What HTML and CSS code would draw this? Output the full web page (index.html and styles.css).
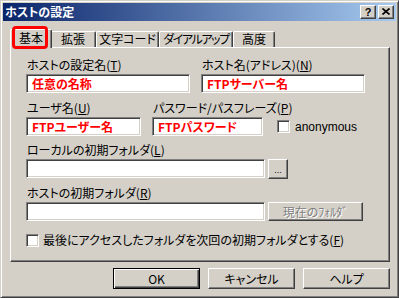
FILE: index.html
```html
<!DOCTYPE html>
<html lang="ja">
<head>
<meta charset="utf-8">
<title>ホストの設定</title>
<link rel="stylesheet" href="styles.css">
</head>
<body>
<div class="window">
  <div class="titlebar">
    <span class="title">ホストの設定</span>
    <div class="tbtns">
      <span class="tbtn help">?</span>
      <span class="tbtn close"><svg width="8" height="7" viewBox="0 0 8 7"><path d="M0.5 0.5 L7.5 6.5 M7.5 0.5 L0.5 6.5" stroke="#000" stroke-width="1.6"/></svg></span>
    </div>
  </div>
  <div class="content">
    <div class="tabs">
      <div class="tab sel">基本<span class="mark"></span></div>
      <div class="tab w46">拡張</div>
      <div class="tab w63">文字コード</div>
      <div class="tab w74">ダイアルアップ</div>
      <div class="tab w42">高度</div>
    </div>
    <div class="panel">
      <div class="row">
        <div class="field w164">
          <div class="label">ホストの設定名(<u>T</u>)</div>
          <div class="input red">任意の名称</div>
        </div>
        <div class="field w164 gap11">
          <div class="label">ホスト名(アドレス)(<u>N</u>)</div>
          <div class="input red">FTPサーバー名</div>
        </div>
      </div>
      <div class="row mt8">
        <div class="field w115">
          <div class="label">ユーザ名(<u>U</u>)</div>
          <div class="input red">FTPユーザー名</div>
        </div>
        <div class="field w111 gap11">
          <div class="label">パスワード/パスフレーズ(<u>P</u>)</div>
          <div class="input red">FTPパスワード</div>
        </div>
        <div class="anon">
          <span class="check"></span><span class="latin">anonymous</span>
        </div>
      </div>
      <div class="row mt7">
        <div class="field">
          <div class="label">ローカルの初期フォルダ(<u>L</u>)</div>
          <div class="inline">
            <div class="input w239"></div>
            <div class="btn dots">...</div>
          </div>
        </div>
      </div>
      <div class="row mt7">
        <div class="field">
          <div class="label">ホストの初期フォルダ(<u>R</u>)</div>
          <div class="inline">
            <div class="input w239"></div>
            <div class="btn cur disabled">現在のﾌｫﾙﾀﾞ</div>
          </div>
        </div>
      </div>
      <div class="row mt12 checkrow">
        <span class="check"></span><span class="cklabel">最後にアクセスしたフォルダを次回の初期フォルダとする(<u>F</u>)</span>
      </div>
    </div>
    <div class="buttons">
      <div class="btn push default">OK</div>
      <div class="btn push">キャンセル</div>
      <div class="btn push">ヘルプ</div>
    </div>
  </div>
</div>
</body>
</html>
```
FILE: styles.css
```css
* { box-sizing: border-box; }
html, body { margin: 0; padding: 0; background: #d4d0c8; }
body {
  font-family: "Noto Sans CJK JP", "Liberation Sans", sans-serif;
  font-size: 12px;
  line-height: 14px;
  color: #000;
  font-feature-settings: "palt";
}
.window {
  width: 399px;
  height: 298px;
  background: #d4d0c8;
  border: 1px solid;
  border-color: #d4d0c8 #404040 #404040 #d4d0c8;
  box-shadow: inset 1px 1px 0 #fff, inset -1px -1px 0 #808080;
  padding: 2px;
}
.titlebar {
  height: 18px;
  display: flex;
  align-items: center;
  background: linear-gradient(to right, #0a246a, #a6caf0);
  padding-left: 2px;
}
.title { color: #fff; font-weight: bold; font-size: 12px; line-height: 14px; }
.tbtns { margin-left: auto; margin-right: 2px; display: flex; gap: 2px; }
.tbtn {
  width: 16px; height: 14px;
  background: #d4d0c8;
  border: 1px solid;
  border-color: #fff #404040 #404040 #fff;
  box-shadow: inset -1px -1px 0 #808080;
  display: flex; align-items: center; justify-content: center;
  font-family: "Liberation Sans", sans-serif;
  font-weight: bold; font-size: 11px; line-height: 12px;
}
.tbtn svg { display: block; margin-top: -1px; }
.content { padding: 8px 6px 0 7px; }
.tabs { display: flex; align-items: flex-end; height: 18px; }
.tab {
  height: 16px;
  background: #d4d0c8;
  border-top: 1px solid #fff;
  border-left: 1px solid #fff;
  border-right: 1px solid #404040;
  box-shadow: inset -1px 0 0 #808080;
  border-radius: 2px 2px 0 0;
  display: flex;
  justify-content: center;
  line-height: 14px;
  white-space: nowrap;
  flex: none;
}
.tab.sel {
  width: 42px; height: 19px;
  margin-right: -2px;
  margin-bottom: -1px;
  position: relative; z-index: 1;
  padding-top: 1px;
}
.mark {
  position: absolute;
  left: 1px; top: -4px;
  width: 36px; height: 23px;
  border: 3px solid #ff0000;
  border-radius: 4px;
}
.w46 { width: 46px; }
.w63 { width: 63px; }
.w74 { width: 74px; letter-spacing: -1.4px; }
.w42 { width: 42px; }
.panel {
  width: 380px; height: 215px;
  border: 1px solid;
  border-color: #fff #404040 #404040 #fff;
  box-shadow: inset -1px -1px 0 #808080;
  padding: 10px 0 0 15px;
}
.row { display: flex; align-items: flex-start; }
.mt7 { margin-top: 7px; }
.mt8 { margin-top: 8px; }
.mt12 { margin-top: 12px; }
.field { display: flex; flex-direction: column; gap: 2px; }
.gap11 { margin-left: 11px; }
.w164 { width: 164px; }
.w115 { width: 115px; }
.w111 { width: 111px; }
.w239 { width: 239px; }
.label { height: 14px; line-height: 14px; padding-left: 1px; white-space: nowrap; }
.input {
  height: 19px;
  background: #fff;
  border: 1px solid;
  border-color: #808080 #fff #fff #808080;
  box-shadow: inset 1px 1px 0 #404040, inset -1px -1px 0 #d4d0c8;
  padding-left: 5px;
  line-height: 17px;
  white-space: nowrap;
}
.input.red { color: #ff0000; font-weight: bold; }
.anon {
  margin-left: 14px;
  align-self: flex-end;
  height: 19px;
  display: flex; align-items: center; gap: 5px;
}
.check {
  width: 13px; height: 13px;
  background: #fff;
  border: 1px solid;
  border-color: #808080 #fff #fff #808080;
  box-shadow: inset 1px 1px 0 #404040, inset -1px -1px 0 #d4d0c8;
  flex: none;
}
.latin { font-family: "Liberation Sans", sans-serif; font-size: 12px; }
.inline { display: flex; align-items: flex-start; gap: 3px; }
.btn {
  background: #d4d0c8;
  border: 1px solid;
  border-color: #fff #404040 #404040 #fff;
  box-shadow: inset -1px -1px 0 #808080, inset 1px 1px 0 #d4d0c8;
  display: flex; align-items: center; justify-content: center;
  white-space: nowrap;
}
.dots { width: 20px; height: 20px; font-family: "Liberation Sans", sans-serif; font-size: 9px; padding-top: 2px; }
.cur { width: 95px; height: 19px; }
.disabled { color: #808080; text-shadow: 1px 1px 0 #fff; }
.checkrow { align-items: center; gap: 4px; }
.cklabel { white-space: nowrap; }
.buttons {
  width: 380px;
  margin-top: 6px;
  display: flex; justify-content: flex-end; gap: 8px;
}
.push { width: 87px; height: 21px; }
.push.default {
  border-color: #000;
  box-shadow: inset 1px 1px 0 #fff, inset -1px -1px 0 #404040, inset -2px -2px 0 #808080;
}
```
